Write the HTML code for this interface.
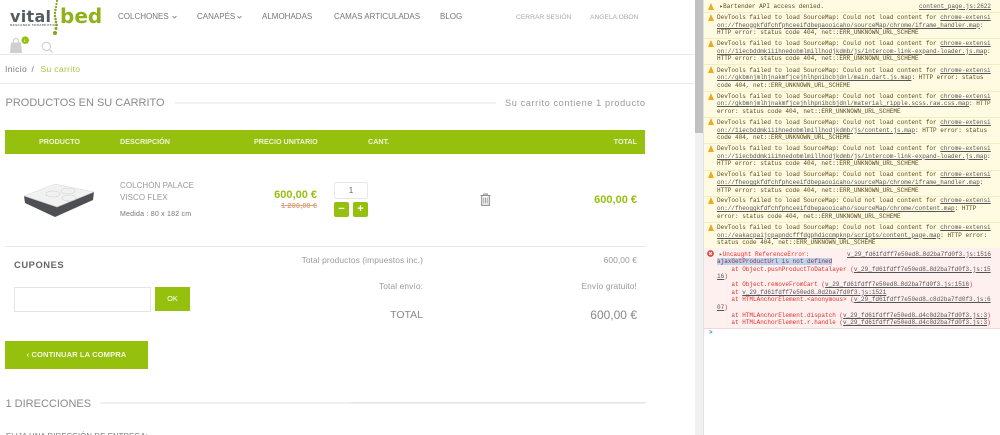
<!DOCTYPE html>
<html lang="es"><head><meta charset="utf-8"><title>Su carrito</title>
<style>
html,body{margin:0;padding:0;background:#fff}
#p{position:relative;width:1000px;height:435px;overflow:hidden;font-family:"Liberation Sans",sans-serif;background:#fff;filter:blur(.35px)}
#p div,#p svg{position:absolute;white-space:nowrap}
.n{top:12px;font-size:8px;color:#777;line-height:10px}
.s{top:13px;font-size:6.7px;color:#aaa;line-height:10px}
.h{font-size:7.2px;font-weight:bold;color:#eef5d8;line-height:10px;top:137px}
.hr{background:#eaeaea;height:1px}
.g{color:#96c00e;font-weight:bold}
.t{color:#999;font-size:8.4px;letter-spacing:.1px;line-height:10px;text-align:right}
.b{background:#96c00e;border-radius:2px;color:#fff;text-align:center;font-weight:bold}
#c{left:703px;top:0;width:297px;height:435px;background:#fff;overflow:hidden}
#c div.l{left:14px;font:6px/8px "Liberation Mono",monospace;color:#5c4a17}
#c div.e{color:#e0322c}
#c u{color:#555}
#c div.w{left:0;width:297px;height:1px;background:#f5ecc0}
.i{left:4.5px;width:0;height:0;border-left:3.5px solid transparent;border-right:3.5px solid transparent;border-bottom:7px solid #efaa1e}
</style></head><body><div id="p">

<!-- logo -->
<div style="left:10px;top:7.5px;font-family:'DejaVu Sans',sans-serif;font-size:16px;font-weight:bold;color:#555b60;letter-spacing:.3px;line-height:18px">vital</div>
<div style="left:10px;top:23.5px;font-size:3px;font-weight:bold;color:#666;letter-spacing:.45px;line-height:3px">DESCANSO TERAPÉUTICO</div>
<div style="left:60px;top:5px;font-family:'DejaVu Sans',sans-serif;font-size:20px;font-weight:bold;color:#8db21a;line-height:22px">bed</div>
<svg style="left:50px;top:0" width="12" height="36" viewBox="0 0 12 36" fill="#7da61a"><circle cx="7" cy="1" r="1.1"/><circle cx="6.500" cy="4" r="1.100"/><circle cx="6" cy="7" r="1.100"/><circle cx="5.500" cy="10" r="1.200"/><circle cx="5" cy="13" r="1.200"/><circle cx="5" cy="16" r="1.200"/><circle cx="5.500" cy="19" r="1.300"/><circle cx="6" cy="22" r="1.300"/><circle cx="6.500" cy="25" r="1.400"/><circle cx="6" cy="28.500" r="1.500"/><circle cx="5" cy="33" r="2"/></svg>

<!-- nav -->
<div class="n" style="left:118px">COLCHONES</div>
<svg style="left:172px;top:15px" width="5" height="4" fill="none" stroke="#777" stroke-width=".8"><path d="M.5 1l2 2 2-2"/></svg>
<div class="n" style="left:197px">CANAPÉS</div>
<svg style="left:237px;top:15px" width="5" height="4" fill="none" stroke="#777" stroke-width=".8"><path d="M.5 1l2 2 2-2"/></svg>
<div class="n" style="left:262px">ALMOHADAS</div>
<div class="n" style="left:334px">CAMAS ARTICULADAS</div>
<div class="n" style="left:440px">BLOG</div>
<div class="s" style="left:516px">CERRAR SESIÓN</div>
<div class="s" style="left:590px">ANGELA OBON</div>

<!-- cart & search icons -->
<svg style="left:9px;top:37px" width="16" height="17" viewBox="0 0 16 17"><path d="M2 5.500h10l1 10.500H1z" fill="#cfcfcf"/><path d="M4.500 6V4a2.500 2.500 0 0 1 5 0v2" fill="none" stroke="#cfcfcf" stroke-width="1.200"/></svg>
<svg style="left:21px;top:36px" width="9" height="9"><circle cx="4.200" cy="4.200" r="3.800" fill="#96c00e"/></svg>
<div style="left:23.600px;top:37.500px;font-size:4px;line-height:5px;color:#fff">1</div>
<svg style="left:40.500px;top:40.500px" width="13" height="13" viewBox="0 0 13 13" fill="none" stroke="#cfcfcf" stroke-width="1.100"><circle cx="5.400" cy="5.400" r="4.200"/><path d="M8.500 8.500l3.200 3.200"/></svg>

<div class="hr" style="left:0;top:54px;width:694px"></div>
<div style="left:5px;top:64px;font-size:8.600px;letter-spacing:.35px;line-height:10px;color:#777">Inicio</div>
<div style="left:31.500px;top:64px;font-size:8.600px;line-height:10px;color:#777">/</div>
<div style="left:40.500px;top:64px;font-size:8.600px;letter-spacing:.3px;line-height:10px;color:#a3c83a">Su carrito</div>
<div class="hr" style="left:0;top:83px;width:694px"></div>

<!-- title -->
<div style="left:5.500px;top:96px;font-size:11px;line-height:14px;color:#8a8a8a">PRODUCTOS EN SU CARRITO</div>
<div style="left:175px;top:102px;width:321px;height:2px;background:#f1f1f1"></div>
<div style="left:505px;top:98px;font-size:9.200px;letter-spacing:.6px;line-height:11px;color:#999">Su carrito contiene 1 producto</div>

<!-- table head -->
<div style="left:5px;top:130px;width:640px;height:23.500px;background:#96c00e"></div>
<div class="h" style="left:39px">PRODUCTO</div>
<div class="h" style="left:120px">DESCRIPCIÓN</div>
<div class="h" style="left:254px">PRECIO UNITARIO</div>
<div class="h" style="left:368px">CANT.</div>
<div class="h" style="right:363px">TOTAL</div>

<!-- mattress -->
<svg style="left:20px;top:180px" width="80" height="42" viewBox="0 0 80 42"><path d="M4 16L35 4 74 12 73 20 35 37 5 23z" fill="#4d4f55"/><path d="M4 16L35 4 74 12 37 27z" fill="#f1f1f1"/><path d="M4 16L37 27 74 12" fill="none" stroke="#bbb" stroke-width=".6"/><ellipse cx="33" cy="14" rx="7" ry="3" fill="none" stroke="#d0d0d0" stroke-width=".6"/><ellipse cx="48" cy="11" rx="7" ry="3" fill="none" stroke="#d0d0d0" stroke-width=".6"/><ellipse cx="49" cy="18" rx="7" ry="3" fill="none" stroke="#d0d0d0" stroke-width=".6"/></svg>

<div style="left:120px;top:180px;font-size:8px;letter-spacing:.05px;line-height:12px;color:#999">COLCHÓN PALACE<br>VISCO FLEX</div>
<div style="left:120px;top:210px;font-size:7px;letter-spacing:.22px;line-height:10px;color:#777">Medida : 80 x 182 cm</div>

<div class="g" style="right:683px;top:188px;font-size:11px;line-height:14px">600,00 €</div>
<div style="right:683px;top:201px;font-size:7.600px;line-height:10px;color:#e2a582;font-weight:bold;text-decoration:line-through">1 200,00 €</div>

<div style="left:334px;top:182px;width:32px;height:15px;border:1px solid #e8e8e8;border-radius:2px;text-align:center;font-size:8px;line-height:15px;color:#666">1</div>
<div class="b" style="left:334px;top:202px;width:15px;height:15px;font-size:11px;line-height:14px">−</div>
<div class="b" style="left:353px;top:202px;width:15px;height:15px;font-size:11px;line-height:14px">+</div>

<svg style="left:480px;top:193px" width="11" height="13" viewBox="0 0 11 13" fill="none" stroke="#8c8c8c"><path d="M.5 2.500h10M3.700 2.300V1h3.600v1.300" stroke-width="1"/><path d="M1.700 3v9.300h7.600V3" stroke-width="1.100"/><path d="M3.800 4.500v6M5.500 4.500v6M7.200 4.500v6" stroke-width=".8"/></svg>

<div class="g" style="right:363px;top:193px;font-size:11px;line-height:14px">600,00 €</div>

<div class="hr" style="left:5px;top:246px;width:641px"></div>

<!-- coupons -->
<div style="left:14px;top:259px;font-size:9.400px;font-weight:bold;letter-spacing:.55px;line-height:12px;color:#666">CUPONES</div>
<div style="left:14px;top:287px;width:135px;height:23px;border:1px solid #e5e5e5;background:#fff"></div>
<div class="b" style="left:155px;top:287px;width:35px;height:24px;border-radius:0;font-size:7.500px;font-weight:normal;line-height:24px">OK</div>

<!-- totals -->
<div class="t" style="right:577px;top:255px">Total productos (impuestos inc.)</div>
<div class="t" style="right:363px;top:255px">600,00 €</div>
<div class="t" style="right:577px;top:281px">Total envío:</div>
<div class="t" style="right:363px;top:281px">Envío gratuito!</div>
<div class="t" style="right:577px;top:308px;font-size:10.500px;line-height:14px;letter-spacing:0;color:#8a8a8a">TOTAL</div>
<div class="t" style="right:363px;top:307px;font-size:12px;line-height:16px;letter-spacing:0;color:#8a8a8a">600,00 €</div>

<div style="left:5px;top:341px;width:143px;height:28px;background:#96c00e;color:#f4f8e4;font-size:7.600px;font-weight:bold;letter-spacing:.08px;line-height:28px;text-align:center">‹ CONTINUAR LA COMPRA</div>

<div style="left:5.500px;top:396.500px;font-size:11px;line-height:14px;color:#8a8a8a">1 DIRECCIONES</div>
<div style="left:100px;top:402px;width:546px;height:2px;background:#f0f0f0"></div>
<div class="hr" style="left:350px;top:402px;width:295px;background:#e6e6e6"></div>
<div style="left:6px;top:431px;font-size:7.600px;letter-spacing:.2px;line-height:10px;color:#777">ELIJA UNA DIRECCIÓN DE ENTREGA:</div>

<!-- scrollbar -->
<div style="left:695px;top:0;width:8px;height:435px;background:#f1f1f1"></div>
<div style="left:695px;top:0;width:8px;height:133px;background:#c1c1c1"></div>

<!-- console -->
<div id="c">
<div style="left:0;top:0;width:297px;height:248px;background:#fffbe3"></div>
<div style="left:0;top:248px;width:297px;height:80px;background:#fff0f0"></div>
<div style="left:0;top:328px;width:297px;height:1px;background:#f0d8d8"></div>

<div class="i" style="top:3px"></div><div class="i" style="top:14px"></div><div class="i" style="top:40px"></div><div class="i" style="top:66px"></div><div class="i" style="top:93px"></div><div class="i" style="top:118px"></div><div class="i" style="top:145px"></div><div class="i" style="top:171px"></div><div class="i" style="top:197px"></div><div class="i" style="top:224px"></div>
<div class="w" style="top:12px"></div><div class="w" style="top:38px"></div><div class="w" style="top:64px"></div><div class="w" style="top:91px"></div><div class="w" style="top:117px"></div><div class="w" style="top:143px"></div><div class="w" style="top:170px"></div><div class="w" style="top:196px"></div><div class="w" style="top:222px"></div>

<div class="l" style="top:2.500px;left:16.500px">▸Bartender API access denied.</div>
<div class="l" style="top:2.500px;left:216px"><u>content_page.js:2622</u></div>

<div class="l" style="top:14px">DevTools failed to load SourceMap: Could not load content for <u>chrome-extensi</u></div>
<div class="l" style="top:21.500px"><u>on://fheoggkfdfchfphceeifdbepaooicaho/sourceMap/chrome/iframe_handler.map</u>:</div>
<div class="l" style="top:29px">HTTP error: status code 404, net::ERR_UNKNOWN_URL_SCHEME</div>

<div class="l" style="top:40px">DevTools failed to load SourceMap: Could not load content for <u>chrome-extensi</u></div>
<div class="l" style="top:47.500px"><u>on://1iecbddmkiiihnedobmlmillhodjkdmb/js/intercom-link-expand-loader.js.map</u>:</div>
<div class="l" style="top:55px">HTTP error: status code 404, net::ERR_UNKNOWN_URL_SCHEME</div>

<div class="l" style="top:66.500px">DevTools failed to load SourceMap: Could not load content for <u>chrome-extensi</u></div>
<div class="l" style="top:74px"><u>on://gkbmnjmlhjnakmfjcejhlhpnibcbjdnl/main.dart.js.map</u>: HTTP error: status</div>
<div class="l" style="top:81.500px">code 404, net::ERR_UNKNOWN_URL_SCHEME</div>

<div class="l" style="top:92.500px">DevTools failed to load SourceMap: Could not load content for <u>chrome-extensi</u></div>
<div class="l" style="top:100px"><u>on://gkbmnjmlhjnakmfjcejhlhpnibcbjdnl/material_ripple.scss.raw.css.map</u>: HTTP</div>
<div class="l" style="top:107.500px">error: status code 404, net::ERR_UNKNOWN_URL_SCHEME</div>

<div class="l" style="top:118.500px">DevTools failed to load SourceMap: Could not load content for <u>chrome-extensi</u></div>
<div class="l" style="top:126.500px"><u>on://1iecbddmkiiihnedobmlmillhodjkdmb/js/content.js.map</u>: HTTP error: status</div>
<div class="l" style="top:134px">code 404, net::ERR_UNKNOWN_URL_SCHEME</div>

<div class="l" style="top:145px">DevTools failed to load SourceMap: Could not load content for <u>chrome-extensi</u></div>
<div class="l" style="top:152.500px"><u>on://1iecbddmkiiihnedobmlmillhodjkdmb/js/intercom-link-expand-loader.js.map</u>:</div>
<div class="l" style="top:160px">HTTP error: status code 404, net::ERR_UNKNOWN_URL_SCHEME</div>

<div class="l" style="top:171px">DevTools failed to load SourceMap: Could not load content for <u>chrome-extensi</u></div>
<div class="l" style="top:179px"><u>on://fheoggkfdfchfphceeifdbepaooicaho/sourceMap/chrome/iframe_handler.map</u>:</div>
<div class="l" style="top:186.500px">HTTP error: status code 404, net::ERR_UNKNOWN_URL_SCHEME</div>

<div class="l" style="top:197px">DevTools failed to load SourceMap: Could not load content for <u>chrome-extensi</u></div>
<div class="l" style="top:205px"><u>on://fheoggkfdfchfphceeifdbepaooicaho/sourceMap/chrome/content.map</u>: HTTP</div>
<div class="l" style="top:213px">error: status code 404, net::ERR_UNKNOWN_URL_SCHEME</div>

<div class="l" style="top:223.500px">DevTools failed to load SourceMap: Could not load content for <u>chrome-extensi</u></div>
<div class="l" style="top:231.500px"><u>on://eakacpaijcpapndcfffdgphdiccmpknp/scripts/content_page.map</u>: HTTP error:</div>
<div class="l" style="top:239px">status code 404, net::ERR_UNKNOWN_URL_SCHEME</div>

<svg style="left:4px;top:250px" width="7" height="7"><circle cx="3.500" cy="3.500" r="3.300" fill="#dc3c32"/><path d="M2 2l3 3M5 2l-3 3" stroke="#fff" stroke-width="1"/></svg>
<div class="l e" style="top:250.500px;left:16px"><span style="color:#666">▸</span>Uncaught ReferenceError:</div>
<div class="l" style="top:250.500px;left:144px"><u>v_29_fd61fdff7e50ed8…8d2ba7fd0f3.js:1516</u></div>
<div class="l e" style="top:258px"><span style="background:#b9d3f0;color:#a03030">ajaxGetProductUrl is not defined</span></div>
<div class="l e" style="top:265.500px">&nbsp;&nbsp;&nbsp;&nbsp;at Object.pushProductToDatalayer (<u>v_29_fd61fdff7e50ed8…8d2ba7fd0f3.js:15</u></div>
<div class="l e" style="top:273px"><u>16</u>)</div>
<div class="l e" style="top:281px">&nbsp;&nbsp;&nbsp;&nbsp;at Object.removeFromCart (<u>v_29_fd61fdff7e50ed8…8d2ba7fd0f3.js:1516</u>)</div>
<div class="l e" style="top:288.500px">&nbsp;&nbsp;&nbsp;&nbsp;at <u>v_29_fd61fdff7e50ed8…8d2ba7fd0f3.js:1521</u></div>
<div class="l e" style="top:296px">&nbsp;&nbsp;&nbsp;&nbsp;at HTMLAnchorElement.&lt;anonymous&gt; (<u>v_29_fd61fdff7e50ed8…c8d2ba7fd0f3.js:6</u></div>
<div class="l e" style="top:304px"><u>07</u>)</div>
<div class="l e" style="top:311.500px">&nbsp;&nbsp;&nbsp;&nbsp;at HTMLAnchorElement.dispatch (<u>v_29_fd61fdff7e50ed8…d4c8d2ba7fd0f3.js:3</u>)</div>
<div class="l e" style="top:319px">&nbsp;&nbsp;&nbsp;&nbsp;at HTMLAnchorElement.r.handle (<u>v_29_fd61fdff7e50ed8…d4c8d2ba7fd0f3.js:3</u>)</div>
<div class="l" style="top:329px;left:6px;color:#3a7bdc;font-weight:bold">&gt;</div>
</div>
<div style="left:703px;top:0;width:1px;height:435px;background:#e2e2e2"></div>
</div></body></html>
